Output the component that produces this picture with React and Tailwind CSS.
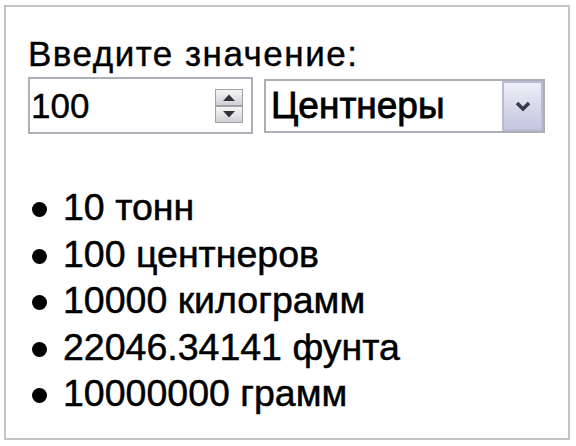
import React from "react";

const results = [
  "10 тонн",
  "100 центнеров",
  "10000 килограмм",
  "22046.34141 фунта",
  "10000000 грамм",
];

function SpinButton({ up }) {
  return (
    <div className="flex h-[17px] w-[28px] items-center justify-center border border-[#9fa3a8] bg-gradient-to-b from-[#f6f6f6] to-[#cfd1d6]">
      <svg className="h-[9px] w-[14px] shrink-0" viewBox="0 0 14 9">
        {up ? (
          <path d="M1 8 L7 1.5 L13 8 Z" fill="#333" />
        ) : (
          <path d="M1 1 L7 7.5 L13 1 Z" fill="#333" />
        )}
      </svg>
    </div>
  );
}

export default function App() {
  const [value, setValue] = React.useState("100");

  return (
    <div className="pl-[4px] pt-[5px] bg-white" style={{ fontFamily: '"Liberation Sans", Arial, sans-serif' }}>
      <div className="w-[566px] h-[435px] border-2 border-[#c3c3c3] pl-[22px] pt-[29px]">
        <div className="text-[35px] leading-[36px] tracking-[1.5px] text-black [-webkit-text-stroke:0.4px_black]">Введите значение:</div>

        <div className="mt-[5px] flex items-center">
          {/* number input */}
          <div className="flex h-[57px] w-[225px] items-center border-2 border-[#aab0b6] bg-white pl-[1px] pr-[8px]">
            <input
              value={value}
              onChange={(e) => setValue(e.target.value)}
              className="w-full min-w-0 bg-transparent text-[35px] leading-[40px] text-black outline-none [-webkit-text-stroke:0.4px_black]"
            />
            <div className="flex shrink-0 flex-col">
              <SpinButton up />
              <SpinButton />
            </div>
          </div>

          {/* select */}
          <div className="ml-[11px] flex h-[54px] w-[281px] border-2 border-[#aab0b6] bg-white">
            <div className="flex flex-1 items-center pl-[5px] text-[37px] leading-[40px] text-black [-webkit-text-stroke:0.8px_black]">Центнеры</div>
            <div className="flex w-[41px] shrink-0 items-center justify-center border-2 border-[#b9bcd2] bg-gradient-to-b from-[#eef0f8] via-[#d8daea] to-[#c4c7de]">
              <svg className="h-[12px] w-[18px] shrink-0" viewBox="0 0 18 12">
                <path d="M3 3 L9 9 L15 3" fill="none" stroke="#3a3a4a" strokeWidth="3.5" />
              </svg>
            </div>
          </div>
        </div>

        <ul className="mt-[50px]">
          {results.map((r) => (
            <li key={r} className="flex items-start text-[37.5px] leading-[46.5px] text-black [-webkit-text-stroke:0.5px_black]">
              <span className="mt-[18px] ml-[4px] mr-[16px] h-[15px] w-[15px] shrink-0 rounded-full bg-black" />
              <span>{r}</span>
            </li>
          ))}
        </ul>
      </div>
    </div>
  );
}
